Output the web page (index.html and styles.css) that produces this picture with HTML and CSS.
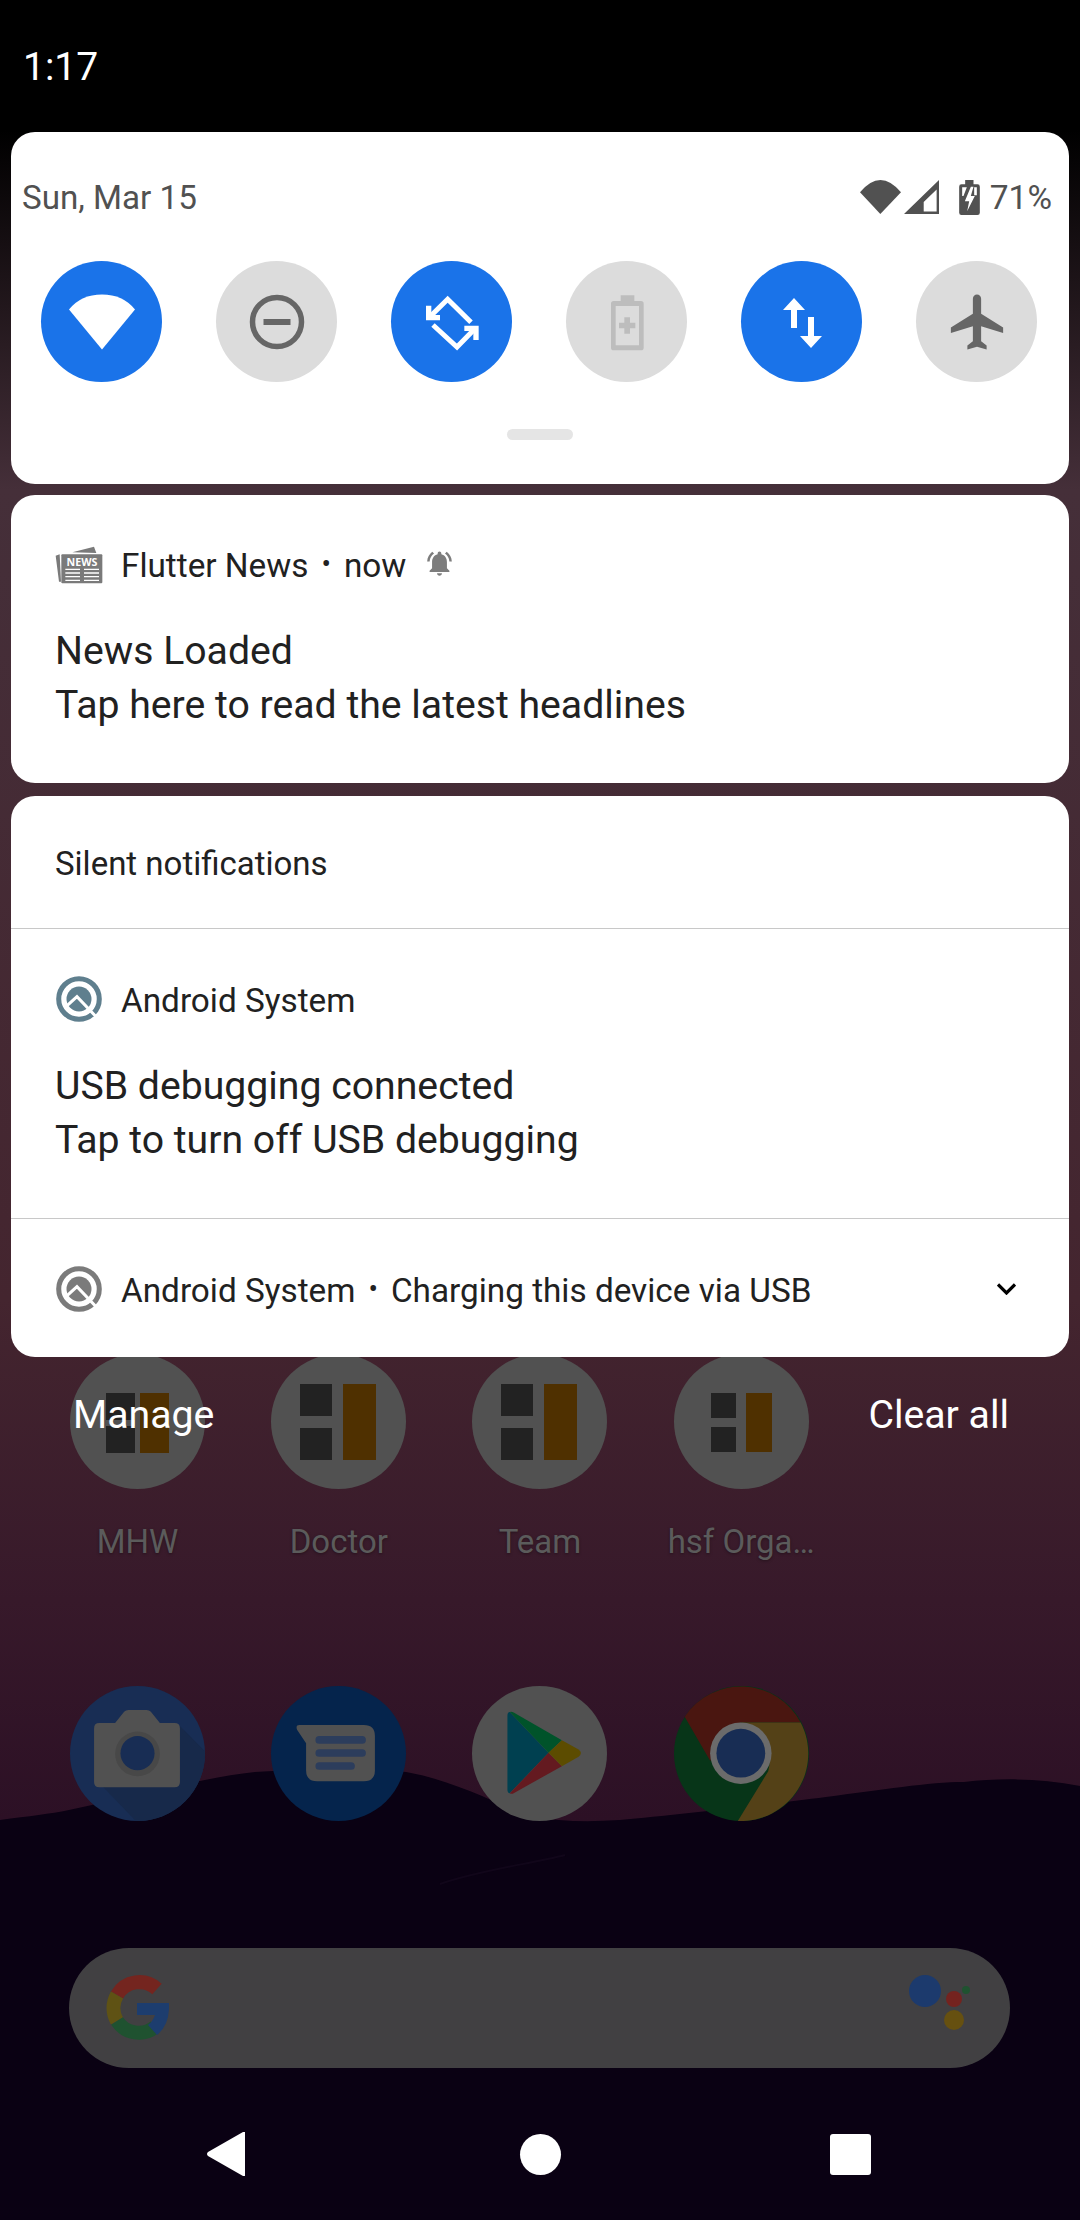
FILE: index.html
```html
<!DOCTYPE html>
<html lang="en">
<head>
  <meta charset="UTF-8" />
  <title>Notification shade</title>
  <link rel="stylesheet" href="styles.css">
</head>
<body>
  <!-- home screen, dimmed behind the shade -->
  <div class="home">
    <svg class="hills" viewBox="0 0 1080 450" preserveAspectRatio="none">
      <path fill="#0a0113" d="M0 50 C30 46 50 44 69 40 C100 33 130 27 160 20 C190 13 225 5 255 2 C300 -1 370 -3 406 2 C435 7 460 17 482 26 C500 34 510 41 530 46 C560 52 590 52 620 50 C680 45 770 34 826 27 C880 20 930 12 964 12 C1000 8 1040 8 1080 16 L1080 450 L0 450 Z"/>
      <path fill="none" stroke="#11061a" stroke-width="2" d="M440 114 C480 100 530 94 565 85"/>
    </svg>

    <div class="app-row">
      <div class="app">
        <svg class="app-icon" viewBox="0 0 135 135">
          <circle cx="67.5" cy="67.5" r="67.5" fill="#515151"/>
          <rect x="36" y="39" width="29" height="27" fill="#222"/>
          <rect x="36" y="72" width="29" height="27" fill="#222"/>
          <rect x="70" y="39" width="29" height="60" fill="#4f3000"/>
        </svg>
        <span class="app-label">MHW</span>
      </div>
      <div class="app">
        <svg class="app-icon" viewBox="0 0 135 135">
          <circle cx="67.5" cy="67.5" r="67.5" fill="#515151"/>
          <rect x="29" y="30" width="32" height="32" fill="#222"/>
          <rect x="29" y="74" width="32" height="32" fill="#222"/>
          <rect x="72" y="30" width="33" height="76" fill="#4f3000"/>
        </svg>
        <span class="app-label">Doctor</span>
      </div>
      <div class="app">
        <svg class="app-icon" viewBox="0 0 135 135">
          <circle cx="67.5" cy="67.5" r="67.5" fill="#515151"/>
          <rect x="29" y="30" width="32" height="32" fill="#222"/>
          <rect x="29" y="74" width="32" height="32" fill="#222"/>
          <rect x="72" y="30" width="33" height="76" fill="#4f3000"/>
        </svg>
        <span class="app-label">Team</span>
      </div>
      <div class="app">
        <svg class="app-icon" viewBox="0 0 135 135">
          <circle cx="67.5" cy="67.5" r="67.5" fill="#515151"/>
          <rect x="37" y="39" width="25" height="25" fill="#222"/>
          <rect x="37" y="73" width="25" height="25" fill="#222"/>
          <rect x="72" y="39" width="26" height="59" fill="#4f3000"/>
        </svg>
        <span class="app-label">hsf Orga…</span>
      </div>
    </div>

    <div class="app-row hotseat">
      <div class="app">
        <svg class="app-icon" viewBox="33 15 404 404">
          <circle cx="235" cy="217" r="202" fill="#182d54"/>
          <path fill="#17294a" d="M362 135 L437 210 A202 202 0 0 1 230 419 L125 310 Z"/>
          <path fill="#515151" d="M105 142 Q105 126 121 126 H168 L195 92 Q200 87 208 87 H262 Q270 87 275 92 L302 126 H346 Q362 126 362 142 V302 Q362 318 346 318 H121 Q105 318 105 302 Z"/>
          <circle cx="235" cy="218" r="67" fill="#484848"/>
          <circle cx="235" cy="216" r="51" fill="#182d54"/>
        </svg>
      </div>
      <div class="app">
        <svg class="app-icon" viewBox="637 15 404 404">
          <circle cx="839" cy="217" r="202" fill="#05244c"/>
          <path fill="#515151" d="M722 132 H915 Q948 132 948 165 V268 Q948 300 915 300 H775 Q742 300 742 268 V186 L715 146 Q710 132 722 132 Z"/>
          <rect x="770" y="165" width="151" height="23" rx="11.5" fill="#2c3d5c"/>
          <rect x="770" y="204" width="151" height="23" rx="11.5" fill="#2c3d5c"/>
          <rect x="770" y="243" width="118" height="23" rx="11.5" fill="#2c3d5c"/>
        </svg>
      </div>
      <div class="app">
        <svg class="app-icon" viewBox="39 15 404 404">
          <circle cx="241" cy="217" r="202" fill="#515151"/>
          <path fill="#004050" d="M145 105 Q145 93 152 93 L268 215 L152 336 Q145 336 145 325 Z"/>
          <path fill="#00532a" d="M152 93 Q158 91 165 95 L308 177 L268 215 Z"/>
          <path fill="#641a20" d="M152 336 L268 215 L308 255 L165 335 Q158 340 152 336 Z"/>
          <path fill="#5c4c00" d="M308 177 L358 205 Q372 215 358 227 L308 255 L268 215 Z"/>
        </svg>
      </div>
      <div class="app">
        <svg class="app-icon" viewBox="643 15 404 404">
          <circle cx="845" cy="217" r="202" fill="#073518"/>
          <path fill="#4a1610" d="M675 107 A202 202 0 0 1 1022 124 H845 Q765 130 752 240 Z"/>
          <path fill="#544117" d="M1022 124 A202 202 0 0 1 834 419 L925 270 Q950 170 845 124 Z"/>
          <circle cx="843" cy="216" r="92" fill="#6b6b6b"/>
          <circle cx="843" cy="216" r="73" fill="#182d54"/>
        </svg>
      </div>
    </div>

    <div class="search-bar">
      <svg class="g-logo" viewBox="0 0 64 66">
        <path fill="none" stroke="#74251f" stroke-width="14" d="M52 14 A26 26 0 0 0 12 20"/>
        <path fill="none" stroke="#5f5214" stroke-width="14" d="M12 20 A26 26 0 0 0 12 46"/>
        <path fill="none" stroke="#1f5230" stroke-width="14" d="M12 46 A26 26 0 0 0 50 52"/>
        <path fill="#1d3d6e" d="M32 28 H64 Q65 50 52 60 L43 50 Q48 46 50 40 H32 Z"/>
      </svg>
      <svg class="assistant" viewBox="0 0 62 68">
        <circle cx="16" cy="16" r="16" fill="#1c3a6d"/>
        <circle cx="45" cy="24" r="8" fill="#74231f"/>
        <circle cx="45" cy="45" r="10" fill="#665010"/>
        <circle cx="57" cy="15" r="4" fill="#1f5230"/>
      </svg>
    </div>

    <div class="nav-bar">
      <svg class="nav-back" viewBox="0 0 38 44"><path fill="#fff" d="M38 0 V44 L36 44 L1 24 Q-1 22 1 20 L36 0 Z"/></svg>
      <div class="nav-home"></div>
      <div class="nav-recent"></div>
    </div>
  </div>

  <!-- notification shade -->
  <div class="shade">
    <div class="status-row"><span class="clock">1:17</span></div>

    <section class="panel qs">
      <div class="qs-top">
        <span class="date">Sun, Mar 15</span>
        <div class="sys-icons">
          <svg class="ic-wifi" viewBox="57 55 123 102"><path fill="#515151" d="M57 92 Q118 18 180 92 L118 157 Z"/></svg>
          <svg class="ic-signal" viewBox="190 57 103 100"><path fill="#515151" fill-rule="evenodd" d="M190 157 L293 57 V157 Z M248 150 H286 V85 L248 122 Z"/></svg>
          <svg class="ic-battery" viewBox="355 52 62 105">
            <path fill="#515151" d="M373 52 H398 V65 H410 Q417 65 417 72 V150 Q417 157 410 157 H362 Q355 157 355 150 V72 Q355 65 362 65 H373 Z"/>
            <path fill="#fff" d="M364 74 H378 L368 100 H364 Z M400 74 H408 V98 H400 Z M390 72 L372 116 H385 L379 146 L402 100 H390 L398 72 Z"/>
          </svg>
          <span class="battery-pct">71%</span>
        </div>
      </div>

      <div class="toggles">
        <div class="toggle on">
          <svg class="tg-icon" viewBox="0 -5.5 66 66"><path fill="#fff" d="M0 15 Q12 0 33 0 Q54 0 66 15 L33 55 Z"/></svg>
        </div>
        <div class="toggle">
          <svg class="tg-icon" viewBox="0 0 66 66">
            <circle cx="33" cy="33" r="24.5" fill="none" stroke="#666" stroke-width="5.5"/>
            <rect x="19.5" y="30" width="27" height="6" fill="#666"/>
          </svg>
        </div>
        <div class="toggle on">
          <svg class="tg-icon small" viewBox="185 153 180 180">
            <g fill="none" stroke="#fff" stroke-width="15">
              <path d="M332 244 L262 175 L208 228"/>
              <path d="M218 252 L290 318 L345 262"/>
            </g>
            <path fill="#fff" d="M197 194 L197 238 L239 238 L239 222 L213 222 L213 194 Z"/>
            <path fill="#fff" d="M355 297 L355 254 L312 254 L312 270 L339 270 L339 297 Z"/>
          </svg>
        </div>
        <div class="toggle">
          <svg class="tg-icon small" viewBox="710 153 180 180">
            <path fill="#bdbdbd" fill-rule="evenodd" d="M781 163 H822 V180 H842 Q850 180 850 188 V320 Q850 328 842 328 H760 Q752 328 752 320 V188 Q752 180 760 180 H781 Z M766 195 V313 H836 V195 Z"/>
            <path fill="#bdbdbd" d="M792 229 H809 V245 H825 V262 H809 V278 H792 V262 H776 V245 H792 Z"/>
          </svg>
        </div>
        <div class="toggle on">
          <svg class="tg-icon" viewBox="0 0 66 66">
            <path fill="#fff" d="M25 9 L36 21 H28 V39 H22 V21 H14 Z"/>
            <path fill="#fff" d="M39 28 H45 V47 H53 L42 59 L31 47 H39 Z"/>
          </svg>
        </div>
        <div class="toggle">
          <svg class="tg-icon" viewBox="0 0 24 24"><path fill="#666" d="M21 16v-2l-8-5V3.5c0-.83-.67-1.5-1.5-1.5S10 2.67 10 3.5V9l-8 5v2l8-2.5V19l-2 1.5V22l3.5-1 3.5 1v-1.5L13 19v-5.5l8 2.5z" transform="translate(.5)"/></svg>
        </div>
      </div>

      <div class="drag-handle"></div>
    </section>

    <section class="panel notif">
      <div class="notif-head">
        <svg class="app-glyph" viewBox="48 25 144 144">
          <path fill="#7a7a7a" d="M50 72 L62 68 L66 150 L60 150 Z M100 62 L165 45 L172 64 Z"/>
          <rect x="67" y="68" width="123" height="87" rx="3" fill="#7a7a7a"/>
          <text x="129" y="102" class="news-word" text-anchor="middle">NEWS</text>
          <path stroke="#fff" stroke-width="4" d="M79 113 H123 M135 113 H180 M79 124 H123 M135 124 H180 M79 135 H123 M135 135 H180 M79 146 H123 M135 146 H180"/>
        </svg>
        <span class="head-text">Flutter News</span>
        <span class="dot">•</span>
        <span class="head-text">now</span>
        <svg class="bell" viewBox="2 2 20 21"><path fill="#7d7d7d" d="M18 16v-5c0-3.07-1.63-5.64-4.5-6.32V4c0-.83-.67-1.5-1.5-1.5s-1.5.67-1.5 1.5v.68C7.64 5.36 6 7.92 6 11v5l-2 2v1h16v-1l-2-2zm-6 6c1.1 0 2-.9 2-2h-4c0 1.1.9 2 2 2zM7.58 4.08L6.15 2.65C3.75 4.48 2.17 7.3 2.03 10.5h2c.15-2.65 1.51-4.97 3.55-6.42zM19.97 10.5h2c-.15-3.2-1.73-6.02-4.12-7.85l-1.42 1.43c2.02 1.45 3.39 3.77 3.54 6.42z"/></svg>
      </div>
      <div class="notif-body">
        <div>News Loaded</div>
        <div>Tap here to read the latest headlines</div>
      </div>
    </section>

    <section class="panel silent">
      <div class="silent-title">Silent notifications</div>
      <div class="silent-item">
        <div class="notif-head">
          <svg class="app-glyph q-teal" viewBox="20 20 142 142">
            <use href="#q-logo"/>
          </svg>
          <span class="head-text">Android System</span>
        </div>
        <div class="notif-body">
          <div>USB debugging connected</div>
          <div>Tap to turn off USB debugging</div>
        </div>
      </div>
      <div class="silent-item compact">
        <div class="notif-head">
          <svg class="app-glyph q-grey" viewBox="20 20 142 142">
            <use href="#q-logo"/>
          </svg>
          <span class="head-text">Android System</span>
          <span class="dot">•</span>
          <span class="head-text">Charging this device via USB</span>
          <svg class="chevron" viewBox="0 0 19 12"><path fill="none" stroke="#000" stroke-width="3.2" d="M1 1.5 L9.5 10 L18 1.5"/></svg>
        </div>
      </div>
    </section>

    <div class="shade-actions">
      <span>Manage</span>
      <span>Clear all</span>
    </div>
  </div>

  <svg class="defs" width="0" height="0">
    <defs>
      <g id="q-logo">
        <circle cx="91" cy="91" r="60" fill="none" stroke="currentColor" stroke-width="15"/>
        <circle cx="91" cy="91" r="37" fill="currentColor"/>
        <path fill="none" stroke="#fff" stroke-width="9" d="M50 116 L85 84 L148 150"/>
      </g>
    </defs>
  </svg>
</body>
</html>
```

FILE: styles.css
```css
* {
  box-sizing: border-box;
}
html, body {
  margin: 0;
  padding: 0;
  height: 2220px;
  overflow: hidden;
}
body {
  width: 1080px;
  position: relative;
  font-family: Roboto, sans-serif;
  background: linear-gradient(to bottom, #000 0, #000 130px, #452f39 490px, #44252f 1300px, #37192a 1600px, #2c1025 1820px);
}

/* home screen */
.home {
  position: absolute;
  inset: 0;
  padding-top: 1354px;
}
.hills {
  position: absolute;
  left: 0;
  top: 1770px;
  width: 1080px;
  height: 450px;
}
.app-row {
  position: relative;
  display: grid;
  grid-template-columns: repeat(4, 201.2px);
  padding-left: 37px;
}
.hotseat {
  margin-top: 121px;
}
.app {
  display: flex;
  flex-direction: column;
  align-items: center;
}
.app-icon {
  width: 135px;
  height: 135px;
  display: block;
}
.app-label {
  margin-top: 30px;
  height: 46px;
  line-height: 46px;
  font-size: 33px;
  color: #5b5b5b;
  text-shadow: 0 1px 3px rgba(0, 0, 0, 0.35);
}
.search-bar {
  position: relative;
  margin: 127px 70px 0 69px;
  height: 120px;
  border-radius: 60px;
  background: #414042;
  display: flex;
  justify-content: space-between;
  align-items: center;
  padding: 0 39px 0 36px;
}
.g-logo {
  width: 64px;
  height: 66px;
}
.assistant {
  width: 62px;
  height: 68px;
  margin-top: 2px;
}
.nav-bar {
  position: relative;
  margin-top: 64px;
  height: 44px;
  padding: 0 209px 0 207px;
  display: flex;
  justify-content: space-between;
  align-items: center;
}
.nav-back {
  width: 38px;
  height: 44px;
}
.nav-home {
  width: 41px;
  height: 41px;
  margin-left: 5px;
  border-radius: 50%;
  background: #fff;
}
.nav-recent {
  width: 41px;
  height: 41px;
  border-radius: 3px;
  background: #fff;
}

/* shade */
.shade {
  position: absolute;
  inset: 0 0 auto 0;
  padding: 0 11px;
}
.status-row {
  height: 132px;
  padding: 41px 0 0 12px;
}
.clock {
  font-size: 39px;
  line-height: 52px;
  color: #fff;
}
.panel {
  background: #fff;
  border-radius: 24px;
  overflow: hidden;
}
.qs {
  height: 352px;
  padding: 40px 0 0;
}
.qs-top {
  display: flex;
  justify-content: space-between;
  align-items: center;
  height: 50px;
  padding: 0 17px 0 11px;
  color: #515151;
}
.date {
  font-size: 33.2px;
}
.sys-icons {
  display: flex;
  align-items: center;
  height: 36px;
}
.ic-wifi {
  width: 41px;
  height: 34px;
  margin-right: 3px;
}
.ic-signal {
  width: 35px;
  height: 34px;
  margin-right: 20px;
}
.ic-battery {
  width: 21px;
  height: 35px;
  margin-right: 10px;
}
.battery-pct {
  font-size: 33.5px;
}
.toggles {
  display: flex;
  justify-content: space-between;
  padding: 0 32px 0 30px;
  margin-top: 39px;
}
.toggle {
  width: 121px;
  height: 121px;
  border-radius: 50%;
  background: #dcdcdc;
  display: flex;
  align-items: center;
  justify-content: center;
}
.toggle.on {
  background: #1a73e9;
}
.tg-icon {
  width: 66px;
  height: 66px;
}
.tg-icon.small {
  width: 60px;
  height: 60px;
}
.drag-handle {
  width: 66px;
  height: 11px;
  border-radius: 6px;
  background: #e5e5e5;
  margin: 47px auto 0;
}
.notif {
  margin-top: 11px;
  height: 288px;
  padding: 45px 44px 0;
}
.notif-head {
  display: flex;
  align-items: center;
  height: 48px;
  font-size: 33.3px;
  color: #212121;
  line-height: 48px;
}
.head-text {
  position: relative;
  top: 2px;
}
.app-glyph {
  width: 48px;
  height: 48px;
  margin-right: 18px;
  flex: none;
}
.news-word {
  font-family: "Open Sans", sans-serif;
  font-size: 32px;
  font-weight: 700;
  fill: #fff;
}
.dot {
  margin: 0 13px;
  font-size: 28px;
}
.bell {
  width: 25px;
  height: 26px;
  margin-left: 21px;
}
.notif-body {
  margin-top: 36px;
  font-size: 39.2px;
  line-height: 54px;
  color: #212121;
}
.silent {
  margin-top: 13px;
  height: 561px;
}
.silent-title {
  height: 132px;
  line-height: 135px;
  padding-left: 44px;
  font-size: 33px;
  color: #212121;
}
.silent-item {
  border-top: 1px solid #c8c8c8;
  padding: 46px 44px 0;
  height: 290px;
}
.silent-item.compact {
  height: 139px;
  padding-top: 46px;
}
.q-teal {
  color: #5f7f8e;
}
.q-grey {
  color: #7b7b7b;
}
.chevron {
  width: 19px;
  height: 12px;
  margin-left: auto;
  margin-right: 9px;
}
.shade-actions {
  display: flex;
  justify-content: space-between;
  margin-top: 33px;
  padding: 0 60px 0 62px;
  font-size: 39.2px;
  line-height: 50px;
  color: #fff;
}
.defs {
  position: absolute;
}
```
